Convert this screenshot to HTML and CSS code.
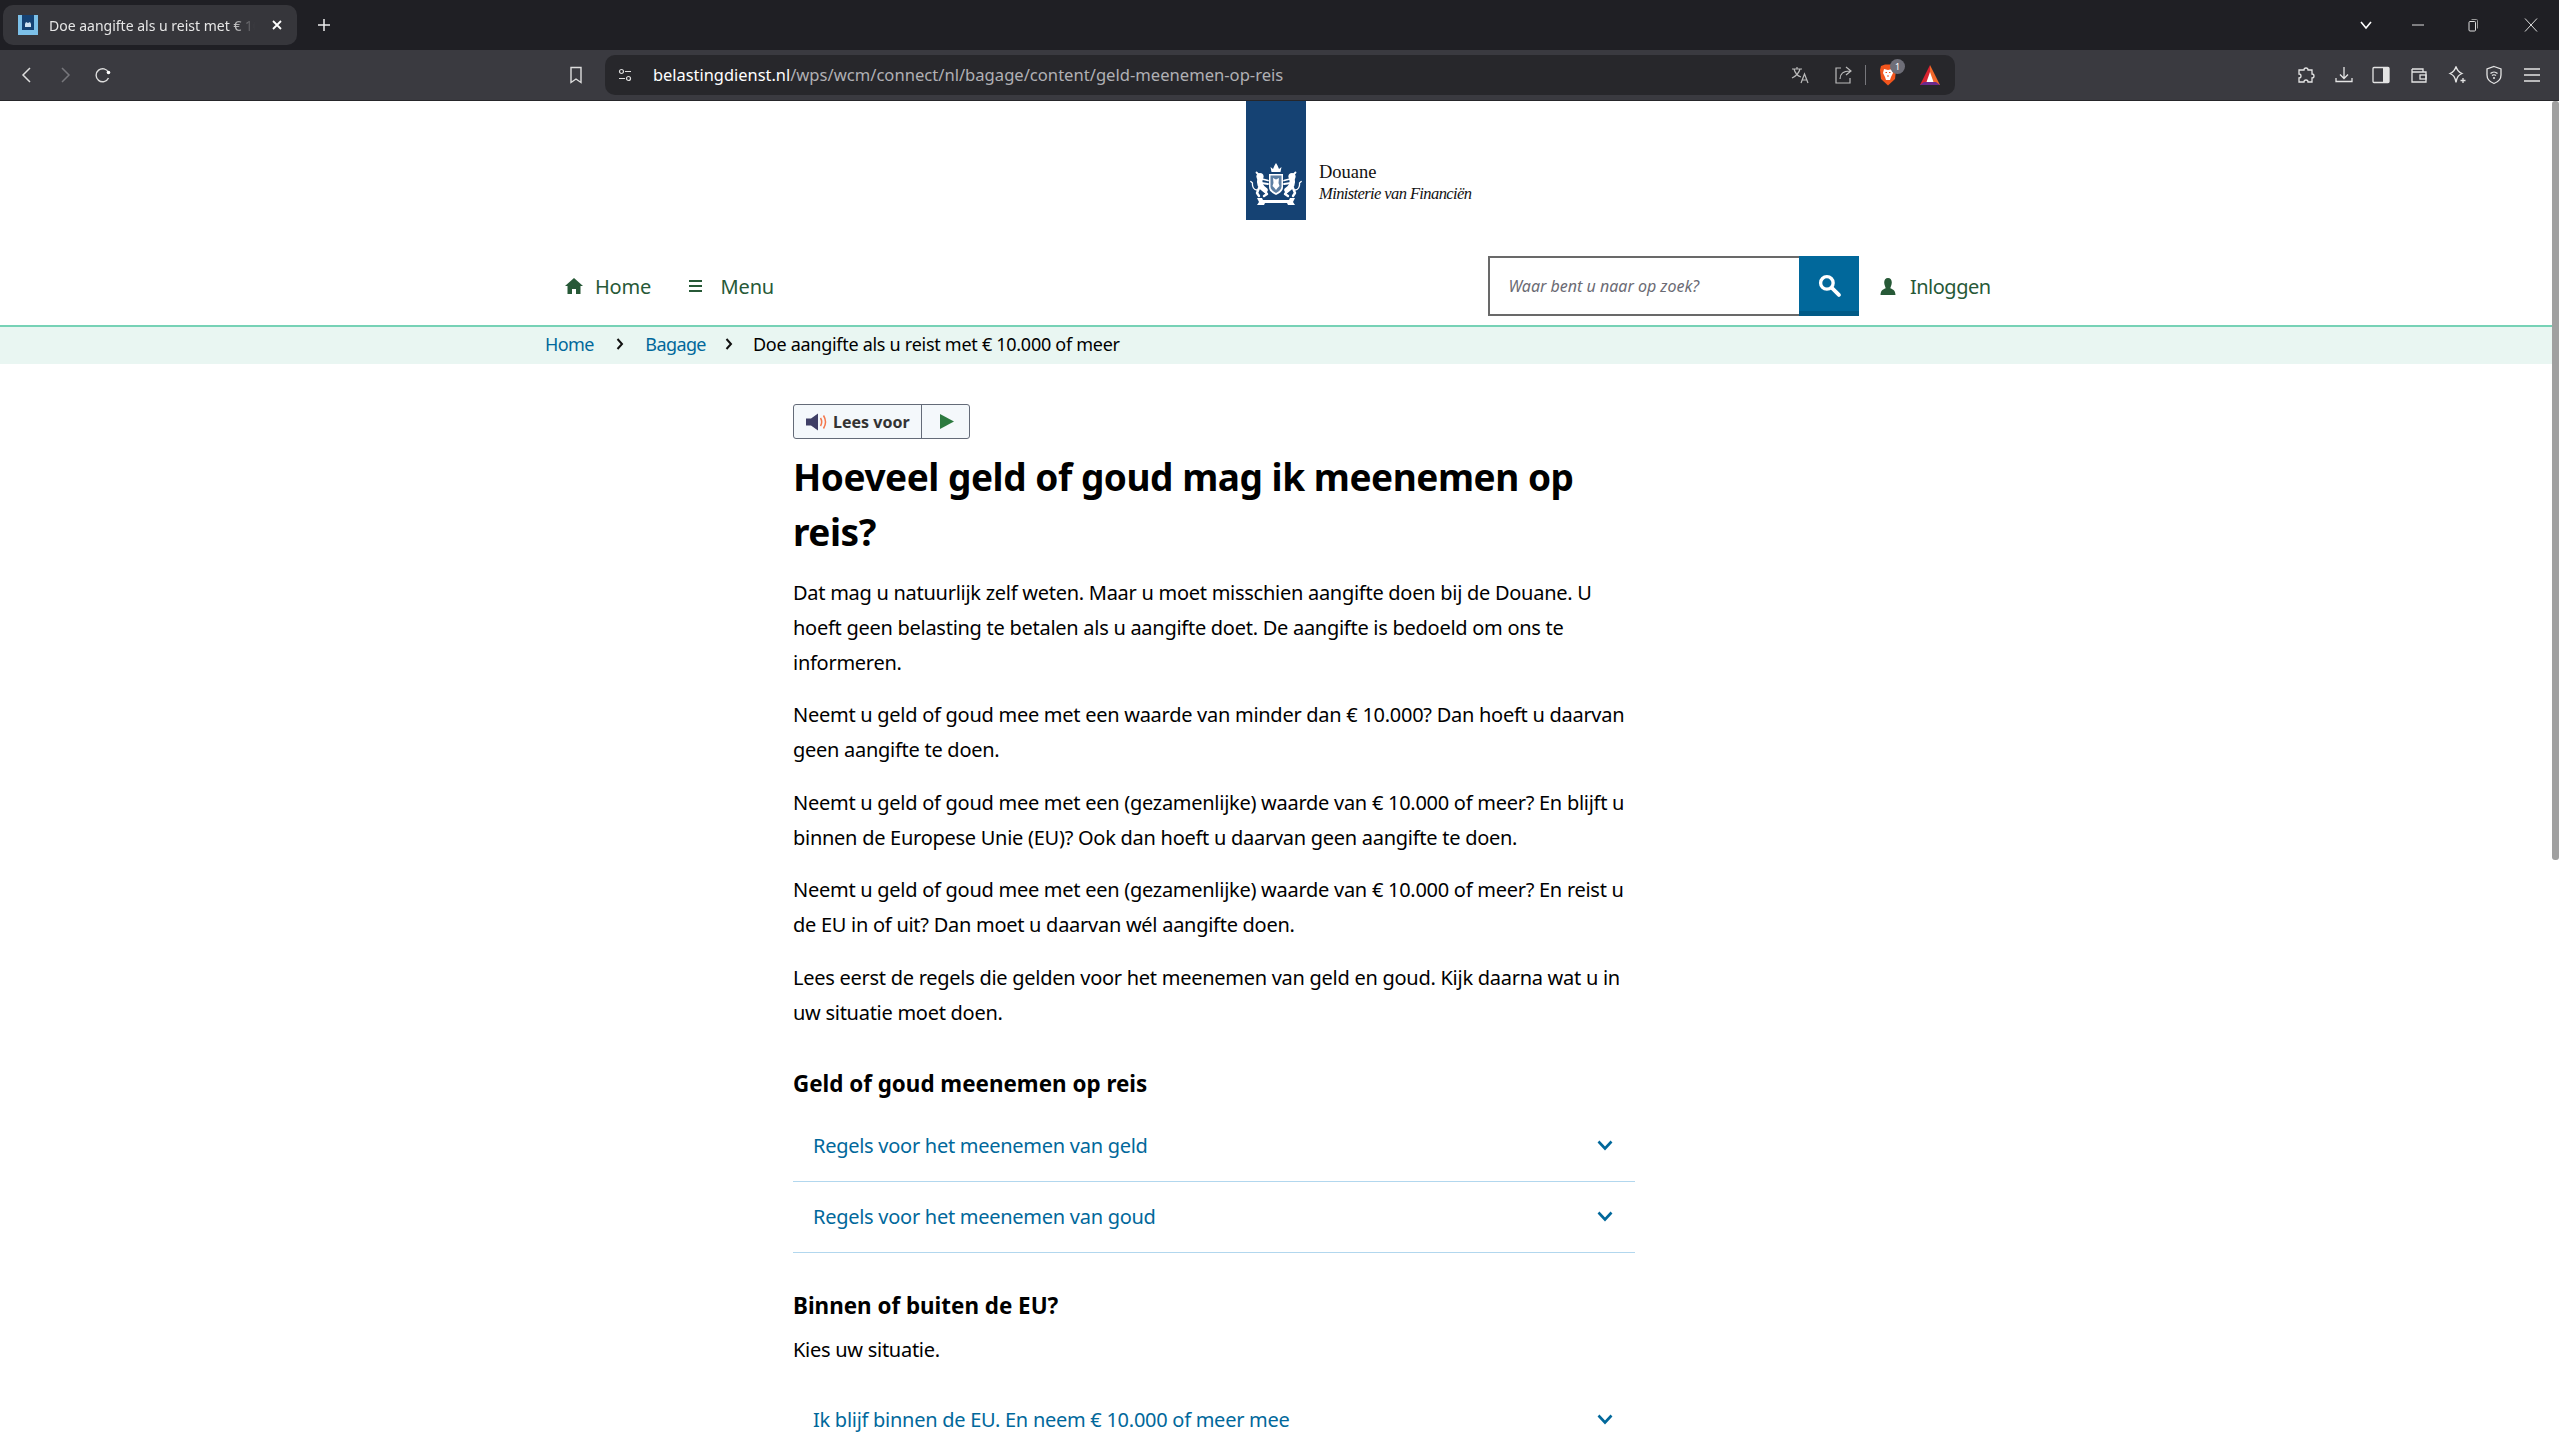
FILE: index.html
```html
<!DOCTYPE html>
<html lang="nl">
<head>
<meta charset="utf-8">
<title>Doe aangifte als u reist met € 10.000 of meer</title>
<link rel="stylesheet" href="styles.css">
</head>
<body>
<div class="tabbar">
  <div class="tab">
    <svg class="favicon" viewBox="0 0 20 20"><rect width="20" height="20" fill="#7cc0e8"/><rect x="4" width="12" height="15" fill="#154273"/><path d="M7 9l1-2 2 1 2-1 1 2v3H7z" fill="#cfe3f2"/></svg>
    <span class="tab-title">Doe aangifte als u reist met € 10.000 of meer</span>
    <svg class="tab-close" viewBox="0 0 12 12"><path d="M2 2l8 8M10 2l-8 8" stroke="#fff" stroke-width="1.8"/></svg>
  </div>
  <svg class="new-tab" viewBox="0 0 14 14"><path d="M7 1v12M1 7h12" stroke="#eee" stroke-width="1.5"/></svg>
  <div class="win-controls">
    <svg class="win" viewBox="0 0 14 14"><path d="M2 4l5 6 5-6" fill="none" stroke="#fff" stroke-width="1.6"/></svg>
    <svg class="win win-min" viewBox="0 0 14 14"><path d="M1 7h12" stroke="#ddd" stroke-width="1"/></svg>
    <svg class="win win-max" viewBox="0 0 14 14"><rect x="3" y="3.500" width="6.500" height="9.500" rx="1" fill="none" stroke="#ddd"/><path d="M5.500 1.500h5a1 1 0 0 1 1 1v8" fill="none" stroke="#999"/></svg>
    <svg class="win win-close" viewBox="0 0 14 14"><path d="M1 .5l12 13M13 .5l-12 13" stroke="#ddd" stroke-width="1"/></svg>
  </div>
</div>
<div class="toolbar">
  <svg class="nav-ic" viewBox="0 0 18 18"><path d="M12 2L5 9l7 7" fill="none" stroke="#ddd" stroke-width="1.5"/></svg>
  <svg class="nav-ic" viewBox="0 0 18 18"><path d="M6 2l7 7-7 7" fill="none" stroke="#77777c" stroke-width="1.5"/></svg>
  <svg class="nav-ic" viewBox="0 0 18 18"><path d="M14.500 6.500A6.500 6.500 0 1 0 14.500 12" fill="none" stroke="#ddd" stroke-width="1.400"/><circle cx="14.500" cy="6.500" r="1.800" fill="#fff"/></svg>
  <svg class="bookmark" viewBox="0 0 14 18"><path d="M2 1.500h10v15l-5-3.500-5 3.500z" fill="none" stroke="#ddd" stroke-width="1.400"/></svg>
  <div class="omnibox">
    <svg class="site-ic" viewBox="0 0 14 14"><circle cx="3.500" cy="3.500" r="2" fill="none" stroke="#ddd" stroke-width="1.200"/><path d="M7 3.500h6M1 10.500h6" stroke="#ddd" stroke-width="1.200"/><circle cx="10.500" cy="10.500" r="2" fill="none" stroke="#ddd" stroke-width="1.200"/></svg>
    <span class="url"><span class="url-host">belastingdienst.nl</span>/wps/wcm/connect/nl/bagage/content/geld-meenemen-op-reis</span>
    <svg class="omni-ic translate" viewBox="0 0 20 20"><path d="M2 4h10M7 2v2M4 4c1 4 4 7 7 8M10 4c-1 4-4 7-8 9" fill="none" stroke="#bbb" stroke-width="1.200"/><path d="M11 18l3.500-9 3.500 9M12.300 15h4.500" fill="none" stroke="#bbb" stroke-width="1.200"/></svg>
    <svg class="omni-ic share" viewBox="0 0 20 20"><path d="M7 3H2v15h14v-5" fill="none" stroke="#bbb" stroke-width="1.200"/><path d="M6 14c0-5 3-8 10-8M12 2l5 4-5 4" fill="none" stroke="#bbb" stroke-width="1.200"/></svg>
    <span class="omni-sep"></span>
    <span class="brave">
      <svg class="brave-ic" viewBox="0 0 18 22"><path d="M2 2l4-1.500h6L16 2l1 4-1 9-7 6.500L2 15 1 6z" fill="#f1551d"/><path d="M5 5l4 1 4-1 1 4-2 4-1 3H7l-1-3-2-4z" fill="#fff"/><path d="M6.500 8.500h1.500M10 8.500h1.500M8 12h2" stroke="#f1551d" stroke-width="1"/></svg>
      <span class="brave-badge">1</span>
    </span>
    <svg class="tri" viewBox="0 0 22 22"><path d="M11 1l5 10 5 10H11z" fill="#f2682a"/><path d="M11 1L1 21h10z" fill="#d8232f"/><path d="M1 21l4-3h12l4 3z" fill="#6b2a8c"/><path d="M11 8l3.500 10h-7z" fill="#fff"/></svg>
  </div>
  <div class="tools">
    <svg class="tool" viewBox="0 0 20 20"><path d="M3 5h5a2 2 0 1 1 4 0h4v4a2 2 0 1 1 0 4v4h-4a2 2 0 1 0-4 0H3v-4a2 2 0 1 0 0-4z" fill="none" stroke="#e4e4e4" stroke-width="1.300"/></svg>
    <svg class="tool" viewBox="0 0 20 20"><path d="M10 2v11M6 9.500l4 4 4-4M2 13v3.500h16V13" fill="none" stroke="#e4e4e4" stroke-width="1.300"/></svg>
    <svg class="tool" viewBox="0 0 20 20"><rect x="2" y="2.500" width="16" height="15" rx="1" fill="none" stroke="#e4e4e4" stroke-width="1.300"/><rect x="12" y="2.500" width="6" height="15" fill="#e4e4e4"/></svg>
    <svg class="tool" viewBox="0 0 20 20"><path d="M3 4h11v3M3 4v13h14V7H3" fill="none" stroke="#e4e4e4" stroke-width="1.300"/><rect x="11" y="10" width="6" height="4" fill="none" stroke="#e4e4e4" stroke-width="1.300"/></svg>
    <svg class="tool" viewBox="0 0 20 20"><path d="M9 1.500c1 4 2.500 5.500 6 7-3.500 1.500-5 3-6 9-1-6-2.500-7.500-6-9 3.500-1.500 5-3 6-7z" fill="none" stroke="#e4e4e4" stroke-width="1.300"/><path d="M16 13v5M13.500 15.500h5" stroke="#e4e4e4" stroke-width="1.300"/></svg>
    <svg class="tool" viewBox="0 0 20 20"><path d="M10 1.500l7 2.500v6c0 4-3 7-7 8.500-4-1.500-7-4.500-7-8.500V4z" fill="none" stroke="#e4e4e4" stroke-width="1.300"/><path d="M6.500 8.500c2-2 5-2 7 0M8 10.500c1-1 3-1 4 0" fill="none" stroke="#e4e4e4" stroke-width="1.200"/><circle cx="10" cy="13" r="1" fill="#e4e4e4"/></svg>
    <svg class="tool" viewBox="0 0 20 20"><path d="M2 4h16M2 10h16M2 16h16" stroke="#e4e4e4" stroke-width="1.500"/></svg>
  </div>
</div>
<div class="viewport">
  <div class="page">
    <header class="masthead">
      <div class="logo">
        <div class="logo-bar">
          <svg class="arms" viewBox="0 0 52 44">
            <path d="M21.500 10l-1-5 2.500 2 1.500-3.500L26 1l1.500 2.500L29 7l2.500-2-1 5z" fill="#fff"/>
            <path d="M19 12h14v13c0 4-3 6-7 8-4-2-7-4-7-8z" fill="#fff"/>
            <path d="M20.500 13.500h11v11c0 3-2.500 5-5.500 6.500-3-1.500-5.500-3.500-5.500-6.500z" fill="#5d7fa3"/>
            <path d="M23 16l3 1.500 3-1.500-.5 5 1 3-2 2-1.500 2-1.500-2-2-2 1-3z" fill="#fff"/>
            <g fill="none" stroke="#fff" stroke-linecap="round" stroke-linejoin="round">
              <circle cx="10" cy="14.500" r="3.600" fill="#fff" stroke="none"/>
              <path d="M8 12l-1.500-1.500M12 17l6 1.500M11 21l7 1" stroke-width="1.800"/>
              <path d="M10 17c-1 4 0 8 5 11" stroke-width="5.500"/>
              <path d="M13 27l4 5-3 2M9 26l-2 5 2 3" stroke-width="2.400"/>
              <path d="M7 28C4 28 2 25 2.500 21L.8 19.500" stroke-width="1.300"/>
            </g>
            <g fill="none" stroke="#fff" stroke-linecap="round" stroke-linejoin="round" transform="matrix(-1 0 0 1 52 0)">
              <circle cx="10" cy="14.500" r="3.600" fill="#fff" stroke="none"/>
              <path d="M8 12l-1.500-1.500M12 17l6 1.500M11 21l7 1" stroke-width="1.800"/>
              <path d="M10 17c-1 4 0 8 5 11" stroke-width="5.500"/>
              <path d="M13 27l4 5-3 2M9 26l-2 5 2 3" stroke-width="2.400"/>
              <path d="M7 28C4 28 2 25 2.500 21L.8 19.500" stroke-width="1.300"/>
            </g>
            <path d="M7 36h5l1 2h26l1-2h5l-2 4 2 3h-7l-1-2H15l-1 2H7l2-3z" fill="#fff"/>
          </svg>
        </div>
        <div class="logo-text">
          <span class="logo-name">Douane</span>
          <span class="logo-min">Ministerie van Financiën</span>
        </div>
      </div>
      <nav class="mainnav">
        <a class="navlink nav-home"><svg class="ic-home" viewBox="0 0 18 16"><path d="M9 0l9 8h-2.500v8H11v-5H7v5H2.500V8H0z" fill="#275937"/></svg>Home</a>
        <a class="navlink nav-menu"><svg class="ic-menu" viewBox="0 0 13 12"><path d="M0 1h13M0 6h13M0 11h13" stroke="#275937" stroke-width="2"/></svg>Menu</a>
        <div class="search">
          <span class="search-ph">Waar bent u naar op zoek?</span>
          <span class="search-btn"><svg class="ic-search" viewBox="0 0 22 22"><circle cx="8.500" cy="8.500" r="6" fill="none" stroke="#fff" stroke-width="3.200"/><path d="M13.500 13.500l6.500 6.500" stroke="#fff" stroke-width="3.600" stroke-linecap="round"/></svg></span>
        </div>
        <a class="navlink nav-login"><svg class="ic-user" viewBox="0 0 16 17"><path d="M8 0c2.500 0 3.800 2 3.800 4.500S10.500 9 10.300 10.300c2 1 5 1.500 5.200 6.700H.5c.2-5.200 3.200-5.700 5.200-6.700C5.500 9 4.200 7 4.200 4.500S5.500 0 8 0z" fill="#275937"/></svg>Inloggen</a>
      </nav>
    </header>
    <div class="crumbs">
      <a class="crumb">Home</a>
      <svg class="crumb-sep" viewBox="0 0 8 12"><path d="M1.500 1l4.500 5-4.500 5" fill="none" stroke="#111" stroke-width="2"/></svg>
      <a class="crumb">Bagage</a>
      <svg class="crumb-sep sep-last" viewBox="0 0 8 12"><path d="M1.500 1l4.500 5-4.500 5" fill="none" stroke="#111" stroke-width="2"/></svg>
      <span class="crumb-current">Doe aangifte als u reist met € 10.000 of meer</span>
    </div>
    <main class="content">
      <div class="readspeaker">
        <span class="rs-label"><svg class="rs-speaker" viewBox="0 0 22 18"><path d="M0 5.500h5L12 .5v17l-7-5H0z" fill="#3f3f66"/><path d="M14.500 5c1.500 2.500 1.500 5.500 0 8M17.500 2.500c2.500 4 2.500 9 0 13" fill="none" stroke="#f4764a" stroke-width="1.500"/></svg>Lees voor</span>
        <span class="rs-play"><svg class="ic-play" viewBox="0 0 14 15"><path d="M0 0l14 7.500L0 15z" fill="#2c7a3f"/></svg></span>
      </div>
      <h1 class="title">Hoeveel geld of goud mag ik meenemen op reis?</h1>
      <p class="para">Dat mag u natuurlijk zelf weten. Maar u moet misschien aangifte doen bij de Douane. U hoeft geen belasting te betalen als u aangifte doet. De aangifte is bedoeld om ons te informeren.</p>
      <p class="para">Neemt u geld of goud mee met een waarde van minder dan € 10.000? Dan hoeft u daarvan geen aangifte te doen.</p>
      <p class="para">Neemt u geld of goud mee met een (gezamenlijke) waarde van € 10.000 of meer? En blijft u binnen de Europese Unie (EU)? Ook dan hoeft u daarvan geen aangifte te doen.</p>
      <p class="para">Neemt u geld of goud mee met een (gezamenlijke) waarde van € 10.000 of meer? En reist u de EU in of uit? Dan moet u daarvan wél aangifte doen.</p>
      <p class="para">Lees eerst de regels die gelden voor het meenemen van geld en goud. Kijk daarna wat u in uw situatie moet doen.</p>
      <h2 class="subhead">Geld of goud meenemen op reis</h2>
      <div class="acc">
        <span>Regels voor het meenemen van geld</span>
        <svg class="chevron" viewBox="0 0 16 11"><path d="M1.500 1.500L8 8.500l6.500-7" fill="none" stroke="#01689b" stroke-width="2.600"/></svg>
      </div>
      <div class="acc">
        <span>Regels voor het meenemen van goud</span>
        <svg class="chevron" viewBox="0 0 16 11"><path d="M1.500 1.500L8 8.500l6.500-7" fill="none" stroke="#01689b" stroke-width="2.600"/></svg>
      </div>
      <h2 class="subhead second">Binnen of buiten de EU?</h2>
      <p class="para kies">Kies uw situatie.</p>
      <div class="acc">
        <span>Ik blijf binnen de EU. En neem € 10.000 of meer mee</span>
        <svg class="chevron" viewBox="0 0 16 11"><path d="M1.500 1.500L8 8.500l6.500-7" fill="none" stroke="#01689b" stroke-width="2.600"/></svg>
      </div>
    </main>
  </div>
  <div class="scrollbar"><div class="thumb"></div></div>
</div>
</body>
</html>
```
FILE: styles.css
```css
* { box-sizing: border-box; }
html, body { margin: 0; height: 100%; overflow: hidden; }
body { display: flex; flex-direction: column; background: #fff; font-family: "Noto Sans", "Open Sans", sans-serif; color: #000; }

.tabbar { height: 50px; flex: none; background: #1f1f24; display: flex; align-items: center; padding: 0 0 0 3px; }
.tab { width: 294px; height: 40px; background: #36363b; border-radius: 10px; display: flex; align-items: center; padding: 0 14px 0 15px; color: #e6e6e6; font: 14px "Noto Sans", sans-serif; }
.favicon { width: 20px; height: 20px; flex: none; margin-right: 11px; }
.tab-title { flex: 1; white-space: nowrap; overflow: hidden; -webkit-mask-image: linear-gradient(90deg, #000 88%, transparent 100%); mask-image: linear-gradient(90deg, #000 88%, transparent 100%); }
.tab-close { width: 12px; height: 12px; flex: none; margin-left: 16px; }
.new-tab { width: 14px; height: 14px; margin-left: 20px; }
.win-controls { margin-left: auto; display: flex; align-items: center; padding-right: 21px; }
.win { width: 14px; height: 14px; }
.win-min { margin-left: 38px; }
.win-max { margin-left: 41px; }
.win-close { margin-left: 44px; }

.toolbar { height: 51px; flex: none; background: #3a3a40; border-bottom: 1px solid #26262a; display: flex; align-items: center; padding: 0 0 0 18px; }
.nav-ic { width: 18px; height: 18px; margin-right: 20px; }
.bookmark { width: 14px; height: 18px; margin-left: 437px; }
.omnibox { width: 1350px; height: 40px; margin-left: 22px; background: #27272b; border-radius: 10px; display: flex; align-items: center; padding: 0 14px 0 13px; }
.site-ic { width: 14px; height: 14px; flex: none; }
.url { margin-left: 21px; font-size: 16.600px; line-height: 38px; color: #b0b0b4; white-space: nowrap; flex: 1; }
.url-host { color: #fff; font-size: 16.400px; }
.omni-ic { width: 20px; height: 20px; flex: none; }
.share { margin-left: 23.500px; }
.omni-sep { width: 1px; height: 20px; background: #77777c; margin: 0 13px 0 11.500px; }
.brave { position: relative; display: block; width: 18px; height: 22px; }
.brave-ic { width: 18px; height: 22px; display: block; }
.brave-badge { position: absolute; top: -5px; left: 11px; width: 15px; height: 15px; border-radius: 50%; background: #6e6e78; color: #fff; font-size: 9px; line-height: 15px; text-align: center; }
.tri { width: 22px; height: 22px; margin-left: 22px; }
.tools { display: flex; align-items: center; gap: 17.700px; margin-left: 341px; }
.tool { width: 20px; height: 20px; }

.viewport { flex: 1; display: flex; min-height: 0; }
.page { flex: 1; overflow: hidden; }
.scrollbar { width: 7px; flex: none; background: #fff; }
.thumb { height: 759px; background: #a0a0a0; border-radius: 3px; }

.masthead { height: 224px; display: flex; flex-direction: column; }
.logo { display: flex; margin-left: 1246px; height: 119px; }
.logo-bar { width: 60px; background: #154273; display: flex; align-items: flex-end; justify-content: center; padding-bottom: 14px; }
.arms { width: 52px; height: 44px; }
.logo-text { margin-left: 13px; display: flex; flex-direction: column; padding-top: 61px; color: #111; font-family: "Liberation Serif", serif; }
.logo-name { font-size: 18.500px; line-height: 21px; }
.logo-min { font-size: 16.500px; line-height: 21px; font-style: italic; letter-spacing: -0.6px; }

.mainnav { height: 105px; padding: 36px 0 0 565px; display: flex; align-items: flex-start; }
.navlink { display: flex; align-items: center; height: 60px; color: #275937; font-size: 20px; letter-spacing: -0.2px; }
.ic-home { width: 18px; height: 16px; margin-right: 12px; }
.ic-menu { width: 13px; height: 12px; margin-right: 19px; }
.nav-menu { margin-left: 37.500px; }
.search { width: 371px; height: 60px; margin-left: 714.500px; border: 2px solid #696969; display: flex; position: relative; }
.search-ph { flex: 1; padding-left: 18px; line-height: 56px; font-style: italic; font-size: 16px; color: #6b6b74; }
.search-btn { width: 60px; height: 60px; margin: -2px -2px 0 0; background: #01689b; border-bottom: 5px solid #015a86; padding-top: 3px; display: flex; align-items: center; justify-content: center; }
.ic-search { width: 23px; height: 23px; }
.nav-login { margin-left: 20.500px; letter-spacing: -0.5px; }
.ic-user { width: 16px; height: 17px; margin-right: 14px; }

.crumbs { height: 39px; background: #e9f6f2; border-top: 2px solid #76d2b6; padding: 0 0 3px 545px; display: flex; align-items: center; font-size: 18px; letter-spacing: -0.25px; }
.crumb { color: #01689b; letter-spacing: -0.6px; }
.crumb-sep { width: 8px; height: 12px; margin: 0 21px 0 22.500px; }
.sep-last { margin: 0 19.500px 0 19.500px; }
.crumb-current { color: #000; letter-spacing: -0.28px; }

.content { width: 842px; margin-left: 793px; padding-top: 40px; }
.readspeaker { width: 177px; height: 35px; display: flex; border: 1px solid #646b78; border-radius: 3px; background: #f4f8fb; }
.rs-label { width: 128px; border-right: 1px solid #646b78; display: flex; align-items: center; padding-left: 12px; font-size: 16px; font-weight: 700; color: #333; }
.rs-speaker { width: 22px; height: 18px; margin-right: 5px; }
.rs-play { flex: 1; display: flex; align-items: center; justify-content: center; padding-left: 2px; }
.ic-play { width: 14px; height: 15px; }
.title { margin: 10px 0 16px; font-size: 37px; line-height: 55px; font-weight: 700; letter-spacing: -0.46px; }
.para { margin: 0 0 17.400px; font-size: 20px; line-height: 35px; letter-spacing: -0.27px; }
.subhead { margin: 36.300px 0 10.400px; font-size: 22.400px; line-height: 35px; font-weight: 700; }
.second { margin: 34.500px 0 9px; }
.kies { margin-bottom: 18.500px; }
.acc { height: 71px; display: flex; align-items: center; justify-content: space-between; padding: 0 22px 2px 20px; border-bottom: 1px solid #b2d7ee; color: #01689b; font-size: 20px; letter-spacing: -0.27px; }
.chevron { width: 16px; height: 11px; }
```
